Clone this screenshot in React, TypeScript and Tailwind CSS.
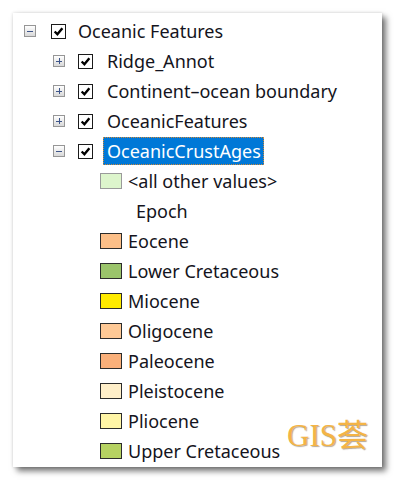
import React from "react";

function Expander({ open }: { open: boolean }) {
  return (
    <div className="w-[12px] h-[12px] border border-[#969696] bg-gradient-to-b from-white to-[#d8d8d8] flex items-center justify-center relative shrink-0">
      <div className="absolute w-[6px] h-[1px] bg-[#3e5589]" />
      {!open && <div className="absolute w-[1px] h-[6px] bg-[#3e5589]" />}
    </div>
  );
}

function Check() {
  return (
    <div className="w-[15px] h-[15px] border-[1.5px] border-[#1a1a1a] bg-white flex items-center justify-center shrink-0">
      <svg width="11" height="11" viewBox="0 0 10 10">
        <path d="M1.5 5 L4 7.5 L8.5 2" fill="none" stroke="#000" strokeWidth="2.2" />
      </svg>
    </div>
  );
}

const legend: [string, string][] = [
  ["Eocene", "#fcbf88"],
  ["Lower Cretaceous", "#9bc46b"],
  ["Miocene", "#ffeb00"],
  ["Oligocene", "#fec996"],
  ["Paleocene", "#fab07a"],
  ["Pleistocene", "#ffefc9"],
  ["Pliocene", "#fff5a6"],
  ["Upper Cretaceous", "#b6d262"],
];

export default function App() {
  return (
    <div className="w-[394px] h-[481px] bg-white pl-[13px] pt-[13px]" style={{ fontFamily: '"Noto Sans", sans-serif' }}>
      <div className="relative w-[369px] h-[454px] bg-white shadow-[4px_4px_6px_rgba(0,0,0,0.55),0_0_3px_rgba(0,0,0,0.15)] pt-[3px] text-[18px] text-[#141420] leading-none">
        <div className="flex items-center h-[30px] pl-[11px]">
          <Expander open />
          <div className="ml-[15px]"><Check /></div>
          <span className="ml-[12px]">Oceanic Features</span>
        </div>
        {["Ridge_Annot", "Continent–ocean boundary", "OceanicFeatures"].map((t) => (
          <div key={t} className="flex items-center h-[30px] pl-[40px]">
            <Expander open={false} />
            <div className="ml-[13px]"><Check /></div>
            <span className="ml-[14px]">{t}</span>
          </div>
        ))}
        <div className="flex items-center h-[30px] pl-[40px]">
          <Expander open />
          <div className="ml-[13px]"><Check /></div>
          <span className="ml-[10px] h-[28px] flex items-center pl-[3px] pr-[2px] bg-[#0078d7] text-white border border-dotted border-[#d08a3a]">OceanicCrustAges</span>
        </div>
        <div className="flex items-center h-[30px] pl-[87px]">
          <div className="w-[22px] h-[16px] border border-[#9a9a9a] bg-[#ddf5cc] shrink-0" />
          <span className="ml-[6px]">&lt;all other values&gt;</span>
        </div>
        <div className="flex items-center h-[30px] pl-[123px]">
          <span>Epoch</span>
        </div>
        {legend.map(([t, c]) => (
          <div key={t} className="flex items-center h-[30px] pl-[87px]">
            <div className="w-[22px] h-[16px] border border-[#2b2b2b] shrink-0" style={{ backgroundColor: c }} />
            <span className="ml-[6px]">{t}</span>
          </div>
        ))}
        <div
          className="absolute left-[274px] top-[407px] text-[31px] text-[#f4b446] leading-none"
          style={{ fontFamily: '"Liberation Serif", "Noto Sans CJK SC", serif', textShadow: "1px 1px 1px rgba(90,60,20,0.45)" }}
        >
          GIS荟
        </div>
      </div>
    </div>
  );
}
